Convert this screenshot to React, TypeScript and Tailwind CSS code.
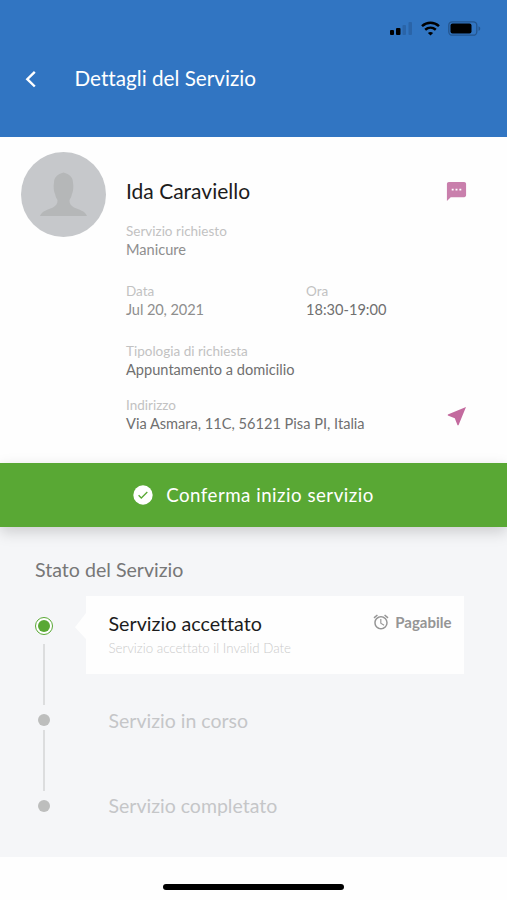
import { MdAccessAlarm, MdSms } from 'react-icons/md';

const PENDING_STEPS = ['Servizio in corso', 'Servizio completato'];

export default function App() {
  return (
    <main className="flex h-[900px] w-[507px] flex-col overflow-hidden bg-[#fefefe] font-['Lato',sans-serif] [font-variant-ligatures:none]">
      <Header />
      <ServiceDetails />
      <button
        type="button"
        className="relative z-10 flex h-16 w-full shrink-0 items-center justify-center bg-[#59a834] text-white shadow-[0_5px_14px_rgba(0,0,0,0.17)]"
      >
        <svg width="20" height="20" viewBox="0 0 20 20">
          <circle cx="10" cy="10" r="9.7" fill="currentColor" />
          <path d="m5.600 10.300 2.700 2.700 6-6" fill="none" stroke="#59a834" strokeWidth="1.300" />
        </svg>
        <span className="ml-[13px] text-[18.7px] tracking-[0.5px]">Conferma inizio servizio</span>
      </button>
      <ServiceStatus />
      <footer className="flex flex-1 justify-center pt-[27px]">
        <div className="h-1.5 w-[181px] rounded-full bg-black" />
      </footer>
    </main>
  );
}

function Header() {
  return (
    <header className="h-[137px] shrink-0 bg-[#3175c2]">
      <div className="flex h-[57px] items-center justify-end gap-2 pr-[26px]">
        <SignalIcon />
        <WifiIcon />
        <BatteryIcon />
      </div>
      <div className="flex h-11 items-center pl-[25px] text-white">
        <button type="button" aria-label="Indietro">
          <svg width="12" height="18" viewBox="0 0 12 18" fill="none" stroke="currentColor" strokeWidth="2.4">
            <path d="M9.8 1.8 2.3 9.2l7.5 7.3" />
          </svg>
        </button>
        <h1 className="ml-[37.5px] text-[20.7px]">Dettagli del Servizio</h1>
      </div>
    </header>
  );
}

function ServiceDetails() {
  return (
    <section className="flex h-[326px] shrink-0 pl-[21px] pr-[39px]">
      <Avatar />
      <div className="ml-5 flex-1 pt-[42px]">
        <div className="flex h-6 items-center justify-between">
          <h2 className="text-[21px] text-[#1c1c1c]">Ida Caraviello</h2>
          <MdSms className="size-[23px] text-[#c97fac]" />
        </div>
        <div className="mt-[19px]">
          <Field label="Servizio richiesto" value="Manicure" valueClass="text-[#8e8e8e]" />
        </div>
        <div className="mt-[22px] grid grid-cols-[180px_1fr]">
          <Field label="Data" value="Jul 20, 2021" valueClass="text-[#8e8e8e] tracking-[-0.1px]" />
          <Field label="Ora" value="18:30-19:00" valueClass="text-[#707070]" />
        </div>
        <div className="mt-[22px]">
          <Field label="Tipologia di richiesta" value="Appuntamento a domicilio" valueClass="text-[#707070]" />
        </div>
        <div className="mt-4 flex items-center justify-between">
          <Field label="Indirizzo" value="Via Asmara, 11C, 56121 Pisa PI, Italia" valueClass="text-[#707070]" />
          <svg className="mr-px mt-0.5" width="20" height="20" viewBox="0 0 20 20" fill="#c36a9e">
            <path d="M19 1 .8 8.6v1l7 2.7 2.7 7h1z" />
          </svg>
        </div>
      </div>
    </section>
  );
}

function Field({ label, value, valueClass }: { label: string; value: string; valueClass: string }) {
  return (
    <div className="whitespace-nowrap">
      <p className="text-[13.5px] leading-[19px] text-[#c2c2c2]">{label}</p>
      <p className={`text-[14.6px] leading-[18px] ${valueClass}`}>{value}</p>
      <div className="h-px" />
    </div>
  );
}

function ServiceStatus() {
  return (
    <section className="h-[330px] shrink-0 bg-[#f5f6f8] pl-[35px] pr-[43px] pt-[30px]">
      <h2 className="text-[19.6px] leading-[26px] text-[#777777]">Stato del Servizio</h2>
      <div className="mt-[13px] flex">
        <div className="flex w-[18px] flex-col items-center pt-[21px]">
          <span className="flex size-[18px] items-center justify-center rounded-full border-[1.5px] border-[#59a834] bg-white">
            <span className="size-3 rounded-full bg-[#59a834]" />
          </span>
          <span className="mt-[9px] h-[61px] w-0.5 bg-[#dcddde]" />
          <span className="mt-[9px] size-3 rounded-full bg-[#bdbebd]" />
          <span className="mt-1 h-[61px] w-0.5 bg-[#dcddde]" />
          <span className="mt-[9px] size-3 rounded-full bg-[#bdbebd]" />
        </div>
        <div className="ml-[33px] flex-1">
          <div className="relative flex h-[78px] justify-between bg-[#fefefe] pl-[22.5px] pr-[12.5px] pt-[14px]">
            {/* bubble pointer towards the active dot */}
            <span className="absolute -left-[11px] top-[17px] h-[26px] w-[11px] bg-[#fefefe] [clip-path:polygon(100%_0,100%_100%,0_55%)]" />
            <div>
              <h3 className="text-[19.7px] leading-[28px] text-[#1c1c1c]">Servizio accettato</h3>
              <p className="text-[13.3px] font-light leading-[20px] text-[#cbcbcb]">Servizio accettato il Invalid Date</p>
            </div>
            <p className="flex h-6 items-center text-[15px] font-bold text-[#959595]">
              <MdAccessAlarm className="mr-[5px] size-[18px]" />
              Pagabile
            </p>
          </div>
          <ul className="mt-[31px] flex flex-col gap-[53px] pl-[22.5px]">
            {PENDING_STEPS.map((step) => (
              <li key={step} className="text-[19.5px] leading-8 text-[#c5c6c8]">{step}</li>
            ))}
          </ul>
        </div>
      </div>
    </section>
  );
}

function Avatar() {
  return (
    <svg className="mt-[15px] shrink-0" width="85" height="85" viewBox="0 0 85 85">
      <circle cx="42.5" cy="42.5" r="42.5" fill="#c6c8cb" />
      <path
        d="M42.500 20.500c-6 1.500-9.500 5-9.500 10-.8 4-.2 9 1.200 12 .5 2.500 1.300 4 2.300 5.500.2 3.500-1.500 5.800-4.500 7.500-5 2.500-11 3-13 8.500h47c-2-5.500-8-6-13-8.500-3-1.700-4.700-4-4.500-7.500 1-1.500 1.800-3 2.300-5.500 1.400-3 2-8 1.200-12 0-5-3.500-8.500-9.500-10z"
        fill="#b5b7b8"
      />
    </svg>
  );
}

function SignalIcon() {
  return (
    <svg width="23" height="15" viewBox="0 0 23 15">
      <rect x="0" y="9" width="4" height="5" rx="1" />
      <rect x="6" y="7" width="4.500" height="7" rx="1" />
      <rect x="12.500" y="4" width="3.500" height="10" rx="1" fill="#285f9f" opacity=".75" />
      <rect x="18.500" y="1" width="3.500" height="13" rx="1" fill="#285f9f" opacity=".75" />
    </svg>
  );
}

function WifiIcon() {
  return (
    <svg width="19" height="15" viewBox="0 0 19 15" fill="none" stroke="#000" strokeWidth="2.500">
      <path d="M1 5.200c5-4.600 12-4.600 17 0M4.200 8.800c3.200-2.900 7.400-2.900 10.600 0" />
      <path d="M9.500 14.500 6.900 11.900c1.500-1.200 3.700-1.200 5.200 0z" fill="#000" stroke="none" />
    </svg>
  );
}

function BatteryIcon() {
  return (
    <svg width="33" height="15" viewBox="0 0 33 15">
      <rect x=".8" y=".8" width="28" height="13.400" rx="3.500" fill="none" stroke="#24568f" strokeWidth="1.300" />
      <rect x="2.500" y="2.500" width="21" height="10" rx="2" />
      <path d="M30.500 5.200c2.300.9 2.300 3.700 0 4.600z" fill="#24568f" />
    </svg>
  );
}
